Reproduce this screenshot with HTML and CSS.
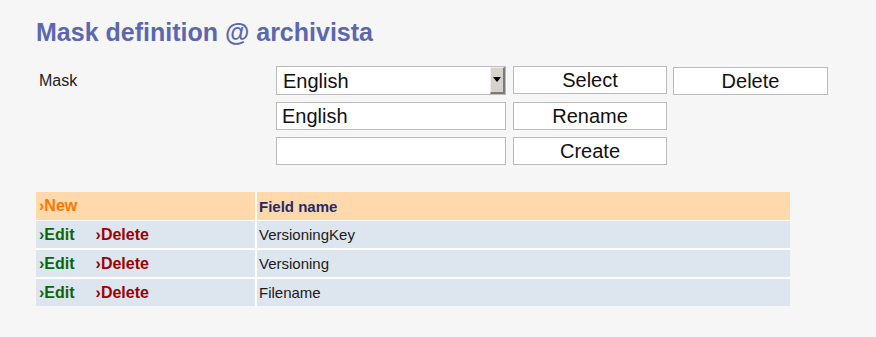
FILE: index.html
```html
<!DOCTYPE html>
<html>

<head>
	<meta charset="UTF-8">
	<title>Mask definition @ archivista</title>
	<link rel="stylesheet" href="styles.css">
</head>

<body>
	<h1>Mask definition @ archivista</h1>

	<form class="maskform">
		<label class="label">Mask</label>
		<div class="selectbox">
			<select class="select">
				<option>English</option>
			</select>
			<span class="arrow"></span>
		</div>
		<button type="button" class="btn">Select</button>
		<button type="button" class="btn btn-delete">Delete</button>

		<input class="field field-2" type="text" value="English">
		<button type="button" class="btn">Rename</button>

		<input class="field field-2" type="text" value="">
		<button type="button" class="btn">Create</button>
	</form>

	<div class="fields">
		<div class="cell head"><a class="new" href="#">›New</a></div>
		<div class="cell head"><span class="colname">Field name</span></div>

		<div class="cell"><a class="edit" href="#">›Edit</a><a class="del" href="#">›Delete</a></div>
		<div class="cell">VersioningKey</div>

		<div class="cell"><a class="edit" href="#">›Edit</a><a class="del" href="#">›Delete</a></div>
		<div class="cell">Versioning</div>

		<div class="cell"><a class="edit" href="#">›Edit</a><a class="del" href="#">›Delete</a></div>
		<div class="cell">Filename</div>
	</div>
</body>

</html>
```

FILE: styles.css
```css
html,
body {
	margin: 0;
	padding: 0;
}

body {
	background: #f6f6f6;
	font-family: "Liberation Sans", Arial, sans-serif;
	color: #111;
	padding: 18px 0 0 36px;
}

h1 {
	margin: 0;
	font-size: 25px;
	font-weight: bold;
	line-height: 28px;
	color: #5c68ad;
}

.maskform {
	display: grid;
	grid-template-columns: 230px 230px 154px 154px;
	column-gap: 7px;
	row-gap: 7px;
	margin: 20px 0 0 3px;
}

.label {
	font-size: 16px;
	color: #222;
	padding-top: 6px;
}

.selectbox {
	display: flex;
	background: #fff;
	border: 1px solid #bbb;
	box-sizing: border-box;
	height: 29px;
}

.select {
	flex: 1;
	appearance: none;
	-webkit-appearance: none;
	border: none;
	background: transparent;
	font-family: "Liberation Sans", Arial, sans-serif;
	font-size: 20px;
	color: #111;
	padding: 0 0 0 6px;
	margin: 0;
	outline: none;
}

.arrow {
	width: 15px;
	display: flex;
	justify-content: center;
	padding-top: 9px;
	box-sizing: border-box;
	background: #d6d3cc;
	border-left: 1px solid #eeeeee;
	border-top: 1px solid #eeeeee;
	border-right: 2px solid #7a7a7a;
	border-bottom: 2px solid #7a7a7a;
}

.arrow::before {
	content: "";
	width: 0;
	height: 0;
	border-left: 4px solid transparent;
	border-right: 4px solid transparent;
	border-top: 5px solid #000;
}

.btn {
	height: 28px;
	background: #fff;
	border: 1px solid #bbb;
	font-family: "Liberation Sans", Arial, sans-serif;
	font-size: 20px;
	color: #111;
	padding: 0;
	margin: 0;
}

.btn-delete {
	margin: 1px 0 0 -1px;
}

.field {
	height: 28px;
	box-sizing: border-box;
	background: #fff;
	border: 1px solid #bbb;
	font-family: "Liberation Sans", Arial, sans-serif;
	font-size: 20px;
	color: #111;
	padding: 0 5px;
	margin: 0;
}

.field-2 {
	grid-column: 2;
}

.fields {
	display: grid;
	grid-template-columns: 219px 533px;
	grid-auto-rows: 27px;
	gap: 2px;
	background: #fff;
	width: 754px;
	margin-top: 27px;
}

.cell {
	display: flex;
	align-items: center;
	background: #dde5ef;
	font-size: 15px;
	color: #1a1a1a;
	padding-left: 2px;
}

.cell:nth-child(odd) {
	padding-left: 3px;
}

.head {
	background: #ffd9ab;
	height: 28px;
}

.cell a {
	font-size: 16px;
	font-weight: bold;
	text-decoration: none;
}

.new {
	color: #ff7700;
}

.edit {
	color: #0b660b;
	margin-right: 21px;
}

.del {
	color: #9c0000;
}

.colname {
	font-weight: bold;
	color: #1f2a6e;
}
```
